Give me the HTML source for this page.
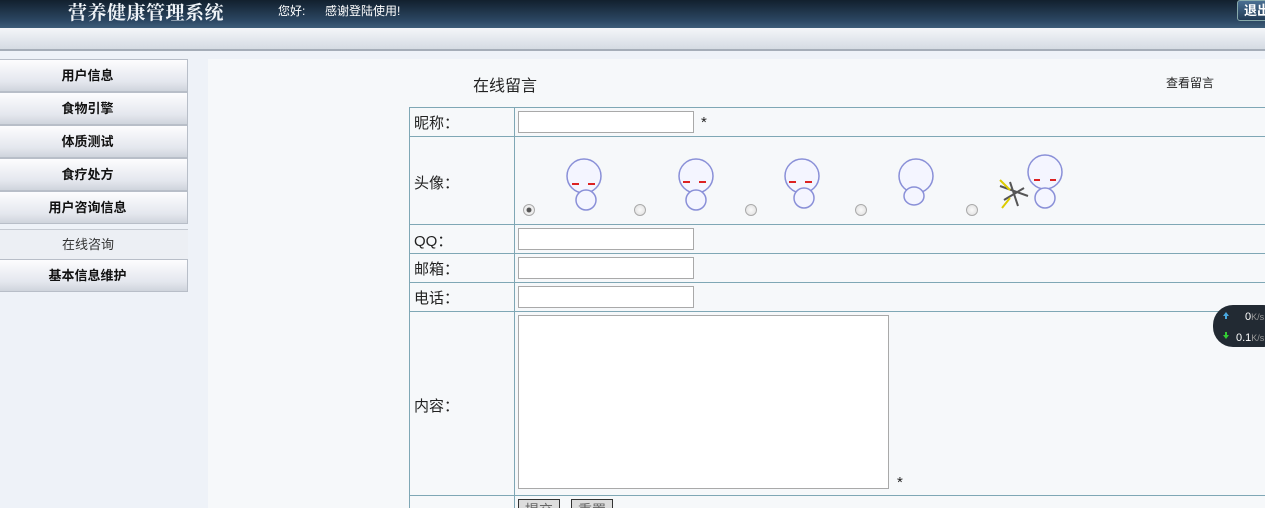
<!DOCTYPE html>
<html style="width:1265px;height:508px;overflow:hidden"><head><meta charset="utf-8"><style>
*{margin:0;padding:0;box-sizing:border-box}
body{width:1265px;height:508px;overflow:hidden;background:#eef2f8;font-family:"Liberation Sans","Noto Sans CJK SC",sans-serif;position:relative}
.hd{position:absolute;left:0;top:0;width:1265px;height:28px;background:linear-gradient(#12202e,#2a4560 70%,#3e5d7a)}
.title{position:absolute;left:68px;top:-2px;color:#f0f4f8;font:bold 19px "Noto Serif CJK SC",serif;letter-spacing:0.5px}
.hi{position:absolute;top:2px;color:#fff;font-size:12px}
.exit{position:absolute;left:1237px;top:0;width:40px;height:21px;border:1px solid #8aa;border-radius:3px;background:linear-gradient(#4a6f92,#223b55);color:#fff;font-size:13px;font-weight:bold;padding-left:6px;line-height:19px}
.bar{position:absolute;left:0;top:28px;width:1265px;height:23px;background:linear-gradient(#f4f6f9,#d5dbe3);border-bottom:2px solid #a5adb8}
.side{position:absolute;left:0;width:188px;height:33px;background:linear-gradient(#fdfdfe,#e4e7ee 70%,#cfd4dc);border:1px solid #b8bec8;border-left:none;text-align:center;font-size:13px;font-weight:bold;line-height:31px;color:#111;padding-right:12px}
.sub{position:absolute;left:0;top:229px;width:188px;height:31px;background:#eceff4;border-top:1px solid #c5cad2;text-align:center;font-size:13px;line-height:29px;color:#333;padding-right:12px}
.main{position:absolute;left:208px;top:59px;width:1057px;height:449px;background:#f6f8fa}
.t{position:absolute;border-color:#7fa7b5;border-style:solid}
.lab{position:absolute;left:414px;font-size:15px;color:#222}
.in{position:absolute;left:518px;width:176px;height:22px;background:#fff;border:1px solid #a9a9a9}
.star{position:absolute;font-size:15px;color:#222}
.rad{position:absolute;width:12px;height:12px;border-radius:50%;border:1px solid #aaa;background:radial-gradient(#fafafa,#ddd)}
.btn{position:absolute;top:499px;height:20px;border:1px solid #333;background:#ddd;font-size:14px;color:#666;padding:0 6px}
</style></head><body>
<div class="hd"></div>
<div class="title">营养健康管理系统</div>
<div class="hi" style="left:278px">您好:</div>
<div class="hi" style="left:325px">感谢登陆使用!</div>
<div class="exit">退出</div>
<div class="bar"></div>
<div class="side" style="top:59px">用户信息</div>
<div class="side" style="top:92px">食物引擎</div>
<div class="side" style="top:125px">体质测试</div>
<div class="side" style="top:158px">食疗处方</div>
<div class="side" style="top:191px">用户咨询信息</div>
<div class="sub">在线咨询</div>
<div class="side" style="top:259px">基本信息维护</div>
<div class="main"></div>
<div style="position:absolute;left:473px;top:72px;font-size:16px;color:#222">在线留言</div>
<div style="position:absolute;left:1166px;top:74px;font-size:12px;color:#222">查看留言</div>
<div class="t" style="left:409px;top:107px;width:870px;height:420px;border-width:1px"></div>
<div class="t" style="left:514px;top:107px;width:0;height:420px;border-width:0 0 0 1px"></div>
<div class="t" style="left:409px;top:136px;width:870px;height:0;border-width:1px 0 0"></div>
<div class="t" style="left:409px;top:224px;width:870px;height:0;border-width:1px 0 0"></div>
<div class="t" style="left:409px;top:253px;width:870px;height:0;border-width:1px 0 0"></div>
<div class="t" style="left:409px;top:282px;width:870px;height:0;border-width:1px 0 0"></div>
<div class="t" style="left:409px;top:311px;width:870px;height:0;border-width:1px 0 0"></div>
<div class="t" style="left:409px;top:495px;width:870px;height:0;border-width:1px 0 0"></div>
<div class="lab" style="top:112px">昵称：</div>
<div class="lab" style="top:172px">头像：</div>
<div class="lab" style="top:230px">QQ：</div>
<div class="lab" style="top:258px">邮箱：</div>
<div class="lab" style="top:287px">电话：</div>
<div class="lab" style="top:395px">内容：</div>
<div class="in" style="top:111px"></div><div class="star" style="left:701px;top:114px">*</div>
<div class="in" style="top:228px"></div>
<div class="in" style="top:257px"></div>
<div class="in" style="top:286px"></div>
<div style="position:absolute;left:518px;top:315px;width:371px;height:174px;background:#fff;border:1px solid #a9a9a9"></div>
<div class="star" style="left:897px;top:474px">*</div>
<div class="rad" style="left:523px;top:204px;background:radial-gradient(#555 30%,#eee 40%)"></div>
<div class="rad" style="left:634px;top:204px"></div>
<div class="rad" style="left:745px;top:204px"></div>
<div class="rad" style="left:855px;top:204px"></div>
<div class="rad" style="left:966px;top:204px"></div>
<svg style="position:absolute;left:0;top:0" width="1265" height="508">
<g fill="#f4f5ff" stroke="#8a90d8" stroke-width="1.5">
<circle cx="584" cy="176" r="17"/><circle cx="696" cy="176" r="17"/><circle cx="802" cy="176" r="17"/><circle cx="916" cy="176" r="17"/><circle cx="1045" cy="172" r="17"/>
<ellipse cx="586" cy="200" rx="10" ry="10"/><ellipse cx="696" cy="200" rx="10" ry="10"/><ellipse cx="804" cy="198" rx="10" ry="10"/><ellipse cx="914" cy="196" rx="10" ry="9"/><ellipse cx="1045" cy="198" rx="10" ry="10"/>
</g>
<g stroke="#d22" stroke-width="2"><path d="M572 184h7M588 184h7M683 182h7M699 182h7M789 182h7M805 182h7M1034 180h6M1050 180h6"/></g>
<g stroke="#555" stroke-width="2" fill="none"><path d="M1000 186l28 10M1010 182l8 24M1004 200l20-12"/></g>
<g stroke="#dc0" stroke-width="2"><path d="M1000 180l10 10M1002 208l8-10"/></g>
<rect x="1213" y="305" width="70" height="42" rx="20" fill="#222a33"/>
<path d="M1226 312l-3 4h2v3h2v-3h2z" fill="#4aa8e0"/><path d="M1226 339l-3-4h2v-3h2v3h2z" fill="#3c3"/>
<text x="1245" y="320" fill="#fff" font-size="11" font-family="Liberation Sans">0<tspan fill="#999" font-size="9">K/s</tspan></text>
<text x="1236" y="341" fill="#fff" font-size="11" font-family="Liberation Sans">0.1<tspan fill="#999" font-size="9">K/s</tspan></text>
</svg>
<div class="btn" style="left:518px">提交</div>
<div class="btn" style="left:571px">重置</div>
</body></html>
